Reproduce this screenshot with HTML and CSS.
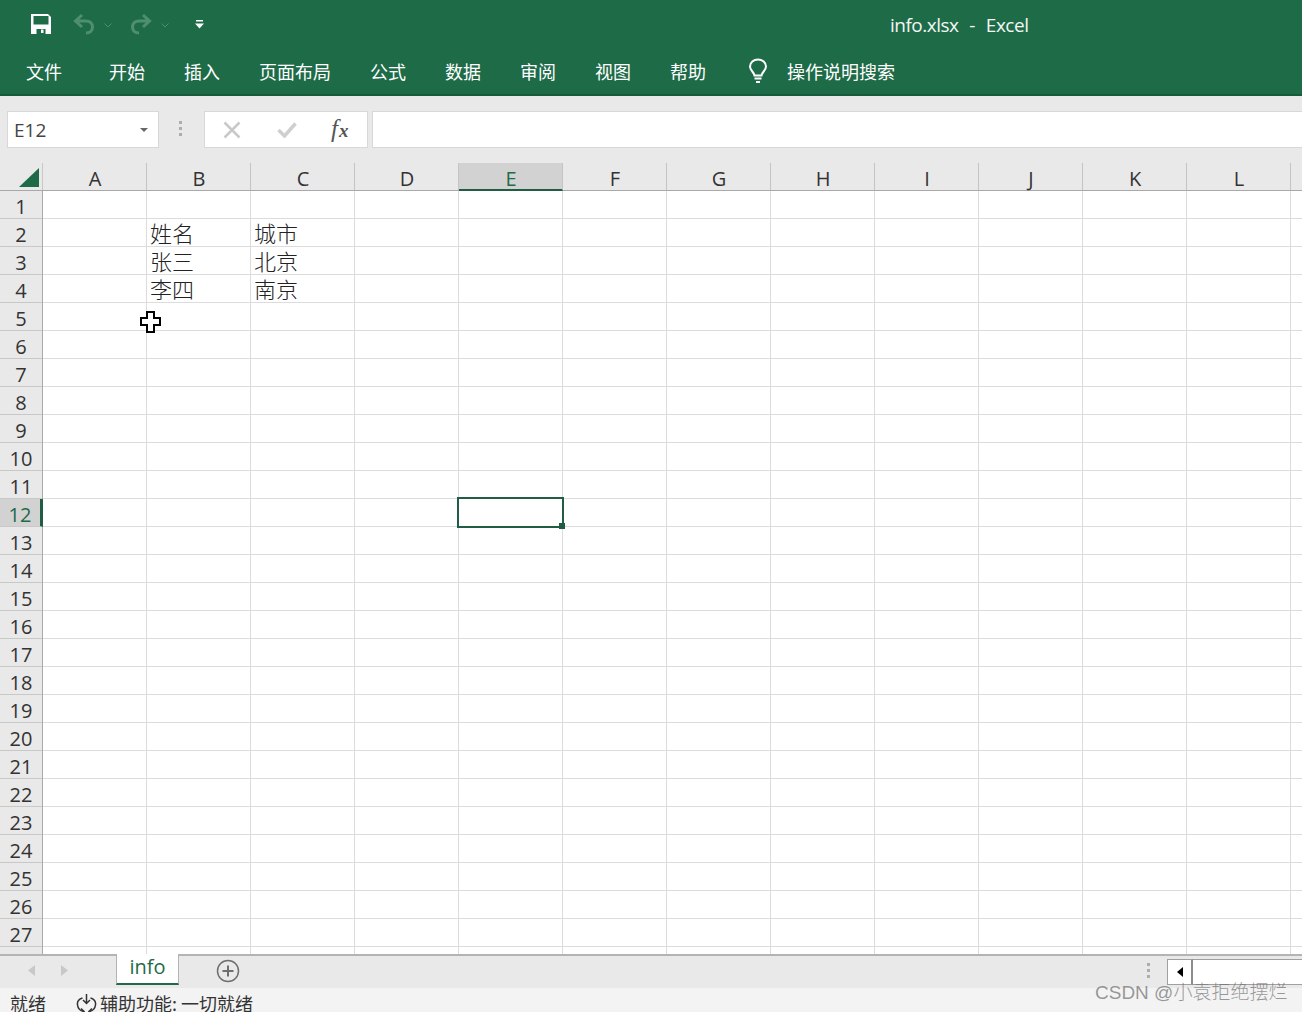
FILE: index.html
```html
<!doctype html>
<html lang="zh-CN">
  <head>
    <meta charset="UTF-8" />
    <title>info.xlsx - Excel</title>
    <link rel="stylesheet" href="styles.css">
  </head>
  <body>
    <div class="app">
      <div class="titlebar">
        <div class="quick">
          <svg class="q-save" width="20" height="20" viewBox="0 0 20 20">
            <path fill="#fff" fill-rule="evenodd" d="M0 0H17L20 3V20H0ZM2.500 2V10.500H17.500V2ZM5.500 15V20H14.500V15ZM10 15.500H12.500V19H10Z" />
          </svg>
          <svg class="q-undo" width="22" height="22" viewBox="0 0 22 22" fill="none" stroke="#4f8f70" stroke-width="3">
            <path d="M9 2 2.500 8 9 14M3 8H13C17 8 19.500 10.500 19.500 14C19.500 17.500 17 20 13 20" />
          </svg>
          <svg class="q-chev" width="8" height="5" viewBox="0 0 8 5" fill="none" stroke="#4f8f70" stroke-width="1"><path d="M.5.5 4 4 7.500.5" /></svg>
          <svg class="q-redo" width="22" height="22" viewBox="0 0 22 22" fill="none" stroke="#4f8f70" stroke-width="3">
            <path d="M13 2 19.500 8 13 14M19 8H9C5 8 2.500 10.500 2.500 14C2.500 17.500 5 20 9 20" />
          </svg>
          <svg class="q-chev" width="8" height="5" viewBox="0 0 8 5" fill="none" stroke="#4f8f70" stroke-width="1"><path d="M.5.5 4 4 7.500.5" /></svg>
          <svg class="q-more" width="9" height="9" viewBox="0 0 9 9"><path fill="#fff" d="M1 0H8V1.500H1ZM0 3.500H9L4.500 8.500Z" /></svg>
        </div>
        <div class="doc-title">info.xlsx&nbsp; - &nbsp;Excel</div>
      </div>

      <div class="tabs">
        <span class="tab tab-file">文件</span>
        <span class="tab">开始</span>
        <span class="tab">插入</span>
        <span class="tab">页面布局</span>
        <span class="tab">公式</span>
        <span class="tab">数据</span>
        <span class="tab">审阅</span>
        <span class="tab">视图</span>
        <span class="tab">帮助</span>
        <svg class="bulb" width="20" height="26" viewBox="0 0 20 26" fill="none" stroke="#fff" stroke-width="2">
          <path d="M6.500 17.500C6 14 2 12.500 2 8.500C2 4.500 5.500 1.500 10 1.500C14.500 1.500 18 4.500 18 8.500C18 12.500 14 14 13.500 17.500Z" />
          <path d="M6.500 20.500H13.500M8 24H12" />
        </svg>
        <span class="tab tab-search">操作说明搜索</span>
      </div>

      <div class="formula">
        <div class="namebox">
          <span>E12</span>
          <i class="namebox-arrow"></i>
        </div>
        <div class="grip grip-formula"><i></i><i></i><i></i></div>
        <div class="fx-buttons">
          <svg width="18" height="18" viewBox="0 0 18 18" stroke="#c9c9c9" stroke-width="2.500"><path d="M1.500 1.500 16.500 16.500M16.500 1.500 1.500 16.500" /></svg>
          <svg width="20" height="16" viewBox="0 0 20 16" fill="none" stroke="#cfcfcf" stroke-width="3.500"><path d="M1.500 8 7.500 14 18.500 1.500" /></svg>
          <span class="fx">f<span class="fx-x">x</span></span>
        </div>
        <div class="formula-input"></div>
      </div>

      <div class="col-heads">
        <div class="corner"><i class="corner-mark"></i></div>
        <div class="col-head">A</div>
        <div class="col-head">B</div>
        <div class="col-head">C</div>
        <div class="col-head">D</div>
        <div class="col-head col-active">E</div>
        <div class="col-head">F</div>
        <div class="col-head">G</div>
        <div class="col-head">H</div>
        <div class="col-head">I</div>
        <div class="col-head">J</div>
        <div class="col-head">K</div>
        <div class="col-head">L</div>
        <div class="col-head"></div>
      </div>

      <div class="sheet">
        <div class="row-heads">
          <div class="row-head">1</div>
          <div class="row-head">2</div>
          <div class="row-head">3</div>
          <div class="row-head">4</div>
          <div class="row-head">5</div>
          <div class="row-head">6</div>
          <div class="row-head">7</div>
          <div class="row-head">8</div>
          <div class="row-head">9</div>
          <div class="row-head">10</div>
          <div class="row-head">11</div>
          <div class="row-head row-active">12</div>
          <div class="row-head">13</div>
          <div class="row-head">14</div>
          <div class="row-head">15</div>
          <div class="row-head">16</div>
          <div class="row-head">17</div>
          <div class="row-head">18</div>
          <div class="row-head">19</div>
          <div class="row-head">20</div>
          <div class="row-head">21</div>
          <div class="row-head">22</div>
          <div class="row-head">23</div>
          <div class="row-head">24</div>
          <div class="row-head">25</div>
          <div class="row-head">26</div>
          <div class="row-head">27</div>
          <div class="row-head"></div>
        </div>
        <div class="cells">
          <div class="cell cell-b2">姓名</div>
          <div class="cell cell-c2">城市</div>
          <div class="cell cell-b3">张三</div>
          <div class="cell cell-c3">北京</div>
          <div class="cell cell-b4">李四</div>
          <div class="cell cell-c4">南京</div>
          <div class="selected"><i class="handle"></i></div>
        </div>
        <svg class="cursor" width="22" height="24" viewBox="0 0 22 24">
          <path fill="#fff" stroke="#000" stroke-width="2" d="M7 2H14V8H20V15H14V22H7V15H1V8H7Z" />
        </svg>
      </div>

      <div class="sheetbar">
        <svg class="nav nav-left" width="7" height="11" viewBox="0 0 7 11"><path fill="#c8c8c8" d="M7 0V11L0 5.500Z" /></svg>
        <svg class="nav nav-right" width="7" height="11" viewBox="0 0 7 11"><path fill="#c8c8c8" d="M0 0V11L7 5.500Z" /></svg>
        <div class="sheet-tab">info</div>
        <svg class="add-sheet" width="24" height="24" viewBox="0 0 24 24" fill="none" stroke="#6f6f6f">
          <circle cx="12" cy="12" r="10.500" stroke-width="1.500" />
          <path stroke-width="2" d="M12 6.500V17.500M6.500 12H17.500" />
        </svg>
        <div class="grip grip-sheet"><i></i><i></i><i></i></div>
        <div class="scroll-btn"><i class="scroll-arrow"></i></div>
        <div class="scroll-track"></div>
      </div>

      <div class="statusbar">
        <span class="status-ready">就绪</span>
        <svg class="status-icon" width="21" height="20" viewBox="0 0 21 20" fill="none" stroke="#333" stroke-width="1.500">
          <path d="M6.500 5C3 6 1 8.500 1.500 12C2 15.500 5 18 8 18.500M14.500 5C18 6 20 8.500 19.500 12C19 15.500 16 18 13 18.500" />
          <path d="M10.500 1V10M7 7 10.500 10.500 14 7M5 15.500 8 18.500 5 21M16 15.500 13 18.500 16 21" />
        </svg>
        <span>辅助功能: 一切就绪</span>
      </div>

      <div class="watermark">CSDN @小袁拒绝摆烂</div>
    </div>
  </body>
</html>
```

FILE: styles.css
```css
* {
  box-sizing: border-box;
}
html,
body {
  margin: 0;
  height: 100%;
  overflow: hidden;
}
body {
  font-family: "Open Sans", "Noto Sans CJK SC", sans-serif;
  color: #333;
  background: #fff;
}
.app {
  position: relative;
  display: flex;
  flex-direction: column;
  height: 1012px;
  overflow: hidden;
}

/* title bar */
.titlebar {
  display: flex;
  align-items: center;
  height: 48px;
  flex: none;
  background: #1e6b48;
  color: #fff;
  position: relative;
}
.quick {
  display: flex;
  align-items: center;
  padding-left: 31px;
}
.q-undo {
  margin-left: 22px;
}
.q-redo {
  margin-left: 18px;
}
.q-chev {
  margin: 3px 0 0 9px;
}
.q-more {
  margin-left: 26px;
}
.doc-title {
  position: absolute;
  left: 890px;
  top: 12px;
  font-size: 19px;
  line-height: 26px;
  letter-spacing: -0.5px;
  word-spacing: 1px;
  color: #f2f6f4;
  white-space: nowrap;
}

/* ribbon tabs */
.tabs {
  display: flex;
  align-items: center;
  gap: 39px;
  height: 48px;
  flex: none;
  padding: 0 0 0 26px;
  background: #1e6b48;
  border-bottom: 2px solid #185a3c;
  color: #fff;
  font-size: 18px;
  font-family: "Noto Sans CJK SC", sans-serif;
}
.tab {
  white-space: nowrap;
}
.tab-file {
  margin-right: 8px;
}
.bulb {
  margin-left: 3px;
}
.tab-search {
  margin-left: -20px;
}

/* formula bar */
.formula {
  display: flex;
  align-items: flex-start;
  height: 67px;
  flex: none;
  padding: 15px 0 0 7px;
  background: #e9e9e9;
}
.namebox {
  display: flex;
  align-items: center;
  justify-content: space-between;
  width: 152px;
  height: 37px;
  padding: 0 10px 0 6px;
  background: #fff;
  border: 1px solid #d8d8d8;
  font-size: 19px;
  color: #444;
}
.namebox-arrow {
  border-top: 4px solid #666;
  border-left: 4px solid transparent;
  border-right: 4px solid transparent;
}
.grip {
  display: flex;
  flex-direction: column;
  gap: 3px;
}
.grip i {
  display: block;
  width: 3px;
  height: 3px;
  background: #adadad;
}
.grip-formula {
  width: 45px;
  padding: 10px 0 0 20px;
}
.fx-buttons {
  display: flex;
  align-items: center;
  width: 164px;
  height: 37px;
  padding: 0 0 0 18px;
  gap: 36px;
  background: #fff;
  border: 1px solid #d8d8d8;
}
.fx {
  margin-left: -2px;
  font-family: "Liberation Serif", serif;
  font-style: italic;
  font-size: 25px;
  line-height: 30px;
  color: #555;
}
.fx-x {
  margin-left: 1px;
  font-size: 19px;
  font-weight: bold;
}
.formula-input {
  flex: 1;
  height: 37px;
  margin-left: 4px;
  background: #fff;
  border: 1px solid #d8d8d8;
  border-right: none;
}

/* column headers */
.col-heads {
  position: relative;
  z-index: 1;
  display: grid;
  grid-template-columns: 43px repeat(13, 104px);
  grid-template-rows: 27px;
  height: 28px;
  flex: none;
  background: #e9e9e9;
  border-bottom: 1px solid #a9a9a9;
}
.corner {
  position: relative;
  border-right: 1px solid #c8c8c8;
}
.corner-mark {
  position: absolute;
  left: 19px;
  top: 5px;
  width: 0;
  height: 0;
  border-bottom: 19px solid #1f6b47;
  border-left: 20px solid transparent;
}
.col-head {
  padding-left: 1px;
  border-right: 1px solid #c4c4c4;
  text-align: center;
  font-size: 20px;
  line-height: 31px;
  color: #333;
}
.col-active {
  background: #d2d2d2;
  color: #1f6b47;
  border-bottom: 2px solid #1f5e43;
  margin-bottom: -1px;
}

/* sheet */
.sheet {
  position: relative;
  display: flex;
  flex: 1;
  min-height: 0;
  overflow: hidden;
}
.row-heads {
  width: 43px;
  flex: none;
  background: #e9e9e9;
  border-right: 1px solid #a9a9a9;
}
.row-head {
  height: 28px;
  border-bottom: 1px solid #c8c8c8;
  text-align: center;
  font-size: 20px;
  line-height: 31px;
  color: #333;
}
.row-active {
  background: #d2d2d2;
  color: #1f6b47;
  border-right: 3px solid #1f5e43;
  margin-right: -1px;
}
.cells {
  flex: 1;
  display: grid;
  grid-template-columns: repeat(13, 104px);
  grid-auto-rows: 28px;
  background-color: #fff;
  background-image:
    repeating-linear-gradient(to right, transparent 0 103px, #dcdcdc 103px 104px),
    repeating-linear-gradient(to bottom, transparent 0 27px, #dcdcdc 27px 28px);
}
.cell {
  padding-left: 3px;
  font-family: "Noto Sans CJK SC", sans-serif;
  font-size: 22px;
  font-weight: 300;
  line-height: 26px;
  color: #222;
  white-space: nowrap;
}
.cell-b2 { grid-area: 2 / 2; }
.cell-c2 { grid-area: 2 / 3; }
.cell-b3 { grid-area: 3 / 2; }
.cell-c3 { grid-area: 3 / 3; }
.cell-b4 { grid-area: 4 / 2; }
.cell-c4 { grid-area: 4 / 3; }
.selected {
  grid-area: 12 / 5;
  position: relative;
  margin: -2px -1px -1px -2px;
  border: 2px solid #1f5e43;
}
.handle {
  position: absolute;
  right: -3px;
  bottom: -3px;
  width: 6px;
  height: 6px;
  background: #1f5e43;
  border: 1px solid #1f5e43;
}
.cursor {
  position: absolute;
  left: 140px;
  top: 119px;
}

/* sheet tabs */
.sheetbar {
  display: flex;
  align-items: flex-start;
  height: 34px;
  flex: none;
  background: #e9e9e9;
  border-top: 2px solid #b4b4b4;
}
.nav {
  margin-top: 9px;
}
.nav-left {
  margin-left: 28px;
}
.nav-right {
  margin-left: 26px;
}
.sheet-tab {
  width: 63px;
  height: 31px;
  margin: -2px 0 0 48px;
  background: #fff;
  border: 1px solid #b4b4b4;
  border-top: none;
  border-bottom: 2px solid #1f6b47;
  text-align: center;
  font-size: 20px;
  line-height: 25px;
  color: #1f6b47;
}
.add-sheet {
  margin: 3px 0 0 37px;
}
.grip-sheet {
  margin: 7px 0 0 907px;
}
.scroll-btn {
  display: flex;
  align-items: center;
  justify-content: center;
  width: 26px;
  height: 26px;
  margin: 3px 0 0 17px;
  background: #fff;
  border: 1px solid #a0a0a0;
  border-right: 2px solid #8c8c8c;
}
.scroll-arrow {
  border-right: 6px solid #000;
  border-top: 5px solid transparent;
  border-bottom: 5px solid transparent;
}
.scroll-track {
  flex: 1;
  height: 26px;
  margin-top: 3px;
  background: #fff;
  border-top: 1px solid #a0a0a0;
  border-bottom: 1px solid #a0a0a0;
}

/* status bar */
.statusbar {
  display: flex;
  align-items: flex-start;
  height: 24px;
  flex: none;
  padding: 2px 0 0 10px;
  background: #f3f3f3;
  font-family: "Noto Sans CJK SC", sans-serif;
  font-size: 18px;
  line-height: 26px;
  color: #333;
  white-space: nowrap;
}
.status-icon {
  margin: 3px 3px 0 30px;
  flex: none;
}
.watermark {
  position: absolute;
  left: 1095px;
  top: 979px;
  font-family: "Liberation Sans", "Noto Sans CJK SC", sans-serif;
  font-size: 19px;
  line-height: 28px;
  font-weight: 300;
  color: rgba(110, 110, 110, 0.7);
  white-space: nowrap;
}
```
